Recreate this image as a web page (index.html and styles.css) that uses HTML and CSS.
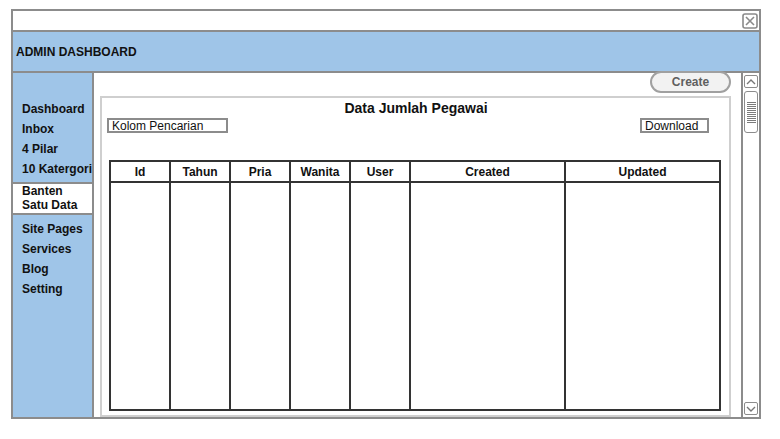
FILE: index.html
```html
<!DOCTYPE html>
<html>
<head>
<meta charset="utf-8">
<link rel="stylesheet" href="styles.css">
</head>
<body>
<div class="window">
  <div class="titlebar">
    <svg class="close" width="16" height="16" viewBox="0 0 16 16">
      <rect x="1" y="1" width="14" height="14" rx="2" fill="#fff" stroke="#8a8a8a" stroke-width="1.6"/>
      <path d="M4 4 L12 12 M12 4 L4 12" stroke="#8a8a8a" stroke-width="1.6" fill="none"/>
    </svg>
  </div>
  <div class="header">ADMIN DASHBOARD</div>
  <div class="body">
    <nav class="sidebar">
      <div class="nav-group">
        <div class="nav-item">Dashboard</div>
        <div class="nav-item">Inbox</div>
        <div class="nav-item">4 Pilar</div>
        <div class="nav-item">10 Katergori</div>
      </div>
      <div class="nav-active">Banten<br>Satu Data</div>
      <div class="nav-group nav-group-2">
        <div class="nav-item">Site Pages</div>
        <div class="nav-item">Services</div>
        <div class="nav-item">Blog</div>
        <div class="nav-item">Setting</div>
      </div>
    </nav>
    <main class="main">
      <div class="toolbar">
        <button class="create">Create</button>
      </div>
      <section class="panel">
        <h1 class="title">Data Jumlah Pegawai</h1>
        <div class="search-row">
          <div class="field search">Kolom Pencarian</div>
          <div class="field download">Download</div>
        </div>
        <table class="grid">
          <colgroup>
            <col class="c-s"><col class="c-s"><col class="c-s"><col class="c-s"><col class="c-s"><col class="c-l"><col class="c-l">
          </colgroup>
          <thead>
            <tr><th>Id</th><th>Tahun</th><th>Pria</th><th>Wanita</th><th>User</th><th>Created</th><th>Updated</th></tr>
          </thead>
          <tbody>
            <tr><td></td><td></td><td></td><td></td><td></td><td></td><td></td></tr>
          </tbody>
        </table>
      </section>
    </main>
    <div class="scrollbar">
      <div class="sb-btn">
        <svg width="10" height="8" viewBox="0 0 10 8"><path d="M1 6 L5 2 L9 6" stroke="#777" stroke-width="1.4" fill="none"/></svg>
      </div>
      <div class="sb-thumb">
        <div class="grip"></div>
      </div>
      <div class="sb-space"></div>
      <div class="sb-btn">
        <svg width="10" height="8" viewBox="0 0 10 8"><path d="M1 2 L5 6 L9 2" stroke="#777" stroke-width="1.4" fill="none"/></svg>
      </div>
    </div>
  </div>
</div>
</body>
</html>
```
FILE: styles.css
```css
* { box-sizing: border-box; }
html, body { margin: 0; padding: 0; background: #fff; }
body { font-family: "Liberation Sans", Arial, sans-serif; color: #111; }

.window {
  margin: 9px 0 0 11px;
  width: 750px;
  height: 410px;
  border: 2px solid #8c8c8c;
  display: flex;
  flex-direction: column;
}

.titlebar {
  height: 21px;
  border-bottom: 2px solid #8c8c8c;
  display: flex;
  justify-content: flex-end;
  align-items: center;
  padding-right: 1px;
  background: #fff;
}
.close { display: block; }

.header {
  height: 41px;
  background: #9fc5e8;
  border-bottom: 2px solid #8c8c8c;
  font-weight: bold;
  font-size: 12px;
  display: flex;
  align-items: center;
  padding-left: 3px;
}

.body {
  flex: 1;
  display: flex;
  min-height: 0;
}

.sidebar {
  width: 81px;
  background: #9fc5e8;
  border-right: 2px solid #8c8c8c;
  padding-top: 26px;
  font-size: 12px;
  font-weight: bold;
}
.nav-item {
  height: 20px;
  line-height: 20px;
  padding-left: 9px;
  white-space: nowrap;
  overflow: hidden;
}
.nav-active {
  background: #fff;
  border-top: 2px solid #8c8c8c;
  border-bottom: 2px solid #8c8c8c;
  height: 33px;
  line-height: 14px;
  padding-left: 9px;
  margin-top: 3px;
  padding-top: 0;
}
.nav-group-2 { padding-top: 4px; }

.main {
  flex: 1;
  display: flex;
  flex-direction: column;
  padding: 0 10px 0 6px;
  background: #fff;
}

.toolbar {
  display: flex;
  justify-content: flex-end;
  height: 25px;
  align-items: flex-start;
  margin-top: -2px;
}
.create {
  width: 81px;
  height: 22px;
  border-radius: 11px;
  border: 2px solid #a0a0a0;
  background: #f2f2f2;
  color: #5f5f5f;
  font-family: "Liberation Sans", Arial, sans-serif;
  font-weight: bold;
  font-size: 12px;
  padding: 0;
}

.panel {
  flex: 1;
  border: 2px solid #cfcfcf;
  padding: 0 7px 4px 5px;
  display: flex;
  flex-direction: column;
}
.title {
  margin: 2px 0 0 3px;
  font-size: 14px;
  font-weight: bold;
  text-align: center;
  line-height: 17px;
}
.search-row {
  display: flex;
  justify-content: space-between;
  padding-right: 13px;
  margin-top: 1px;
}
.field {
  height: 15px;
  border: 2px solid #8c8c8c;
  font-size: 12px;
  line-height: 12px;
  padding-left: 3px;
  background: #fff;
}
.search { width: 121px; }
.download { width: 69px; }

.grid {
  margin: 27px 0 0 2px;
  width: 612px;
  flex: 1;
  border-collapse: collapse;
  table-layout: fixed;
  border: 2px solid #333;
}
.c-s { width: 60px; }
.c-l { width: 155px; }
.grid th {
  height: 21px;
  font-size: 12px;
  font-weight: bold;
  border: 2px solid #333;
  padding: 0;
}
.grid td {
  border: 2px solid #333;
  border-top: none;
  border-bottom: none;
}

.scrollbar {
  width: 18px;
  border-left: 2px solid #8c8c8c;
  display: flex;
  flex-direction: column;
  padding: 2px 0 2px 0;
  align-items: center;
}
.sb-btn {
  width: 14px;
  height: 13px;
  border: 1.5px solid #8c8c8c;
  border-radius: 2px;
  display: flex;
  align-items: center;
  justify-content: center;
}
.sb-thumb {
  margin-top: 3px;
  width: 14px;
  height: 42px;
  border: 1.5px solid #8c8c8c;
  border-radius: 3px;
  display: flex;
  align-items: center;
  justify-content: center;
}
.grip {
  width: 9px;
  height: 21px;
  background: repeating-linear-gradient(to bottom, #7a7a7a 0 1px, transparent 1px 2px);
}
.sb-space { flex: 1; }
```
